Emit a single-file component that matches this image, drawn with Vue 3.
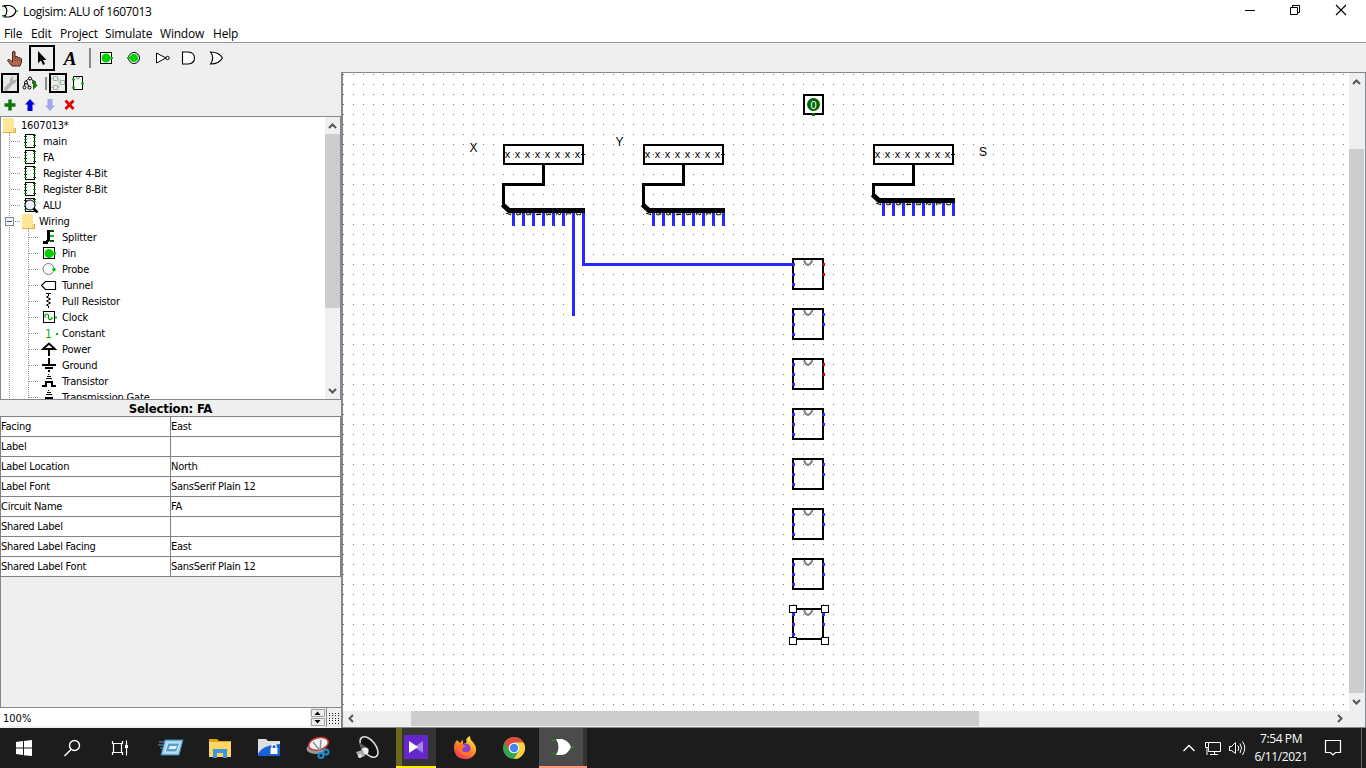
<script setup>
const menus = [
  { t: 'File', w: 27 }, { t: 'Edit', w: 29 }, { t: 'Project', w: 45 },
  { t: 'Simulate', w: 55 }, { t: 'Window', w: 53 }, { t: 'Help', w: 40 }
]
const tree = [
  { t: '1607013*', k: 'root', x: 21 },
  { t: 'main', k: 'circuit', x: 43 },
  { t: 'FA', k: 'circuit', x: 43 },
  { t: 'Register 4-Bit', k: 'circuit', x: 43 },
  { t: 'Register 8-Bit', k: 'circuit', x: 43 },
  { t: 'ALU', k: 'current', x: 43 },
  { t: 'Wiring', k: 'folder', x: 39 },
  { t: 'Splitter', k: 'splitter', x: 62 },
  { t: 'Pin', k: 'pin', x: 62 },
  { t: 'Probe', k: 'probe', x: 62 },
  { t: 'Tunnel', k: 'tunnel', x: 62 },
  { t: 'Pull Resistor', k: 'resistor', x: 62 },
  { t: 'Clock', k: 'clock', x: 62 },
  { t: 'Constant', k: 'constant', x: 62 },
  { t: 'Power', k: 'power', x: 62 },
  { t: 'Ground', k: 'ground', x: 62 },
  { t: 'Transistor', k: 'transistor', x: 62 },
  { t: 'Transmission Gate', k: 'gate', x: 62 }
]
const attrs = [
  ['Facing', 'East'], ['Label', ''], ['Label Location', 'North'],
  ['Label Font', 'SansSerif Plain 12'], ['Circuit Name', 'FA'], ['Shared Label', ''],
  ['Shared Label Facing', 'East'], ['Shared Label Font', 'SansSerif Plain 12']
]
const buses = [
  { x: 503, y: 208, n: 8 }, { x: 643, y: 208, n: 8 }, { x: 873, y: 198, n: 8 }
]
const chips = [0, 1, 2, 3, 4, 5, 6, 7].map(i => ({ y: 258 + i * 50, err: i === 0 || i === 2 }))
const handles = [[789.5, 605.5], [821.5, 605.5], [789.5, 637.5], [821.5, 637.5]]
</script>

<template>
  <div class="screen">
    <header class="title">
      <svg class="logo" width="20" height="20" viewBox="0 0 20 20">
        <path d="M4.500 5.500H9C13 6 15 8.500 16 11C15 14 13 16.500 9 17H4.500C7.500 13 7.500 9 4.500 5.500Z" fill="#fff" stroke="#000" stroke-width="1.200" />
        <path d="M2 6.500H5M2 15.500H5" stroke="#000" /><path d="M2 6h2M2 16h2M16 11h2" stroke="#00c800" stroke-width="1.500" />
      </svg>
      <span class="caption">Logisim: ALU of 1607013</span>
      <svg class="winbtns" width="146" height="24" viewBox="1220 0 146 24" fill="none" stroke="#000">
        <path d="M1245 10.500H1255" />
        <path d="M1290.500 7.500H1297.500V14.500H1290.500ZM1292.500 7V5.500H1299.500V12.500H1298" />
        <path d="M1336 5L1346 15M1346 5L1336 15" stroke-width="1.100" />
      </svg>
    </header>
    <nav class="menubar"><span v-for="m in menus" :key="m.t" :style="{ width: m.w + 'px' }">{{ m.t }}</span></nav>

    <div class="toolbar">
      <svg class="tool" viewBox="0 0 28 28">
        <path d="M13 7.500Q14.500 6.500 15 8V13L17 12.500L18.500 13.500L20 13.500L21.500 15V18L20 22H12L7.500 16.500Q8 15 9.500 15.500L12.500 18V8Z" fill="#b5694e" stroke="#3c241c" />
        <path d="M15 13V17M17.500 14V17M19.500 15V17" stroke="#56382c" stroke-width=".6" />
      </svg>
      <div class="tool chosen">
        <svg width="28" height="28" viewBox="0 0 28 28"><path d="M10 7V19L13 16.500L15 21L17 20L15 16H18.500Z" fill="#000" /></svg>
      </div>
      <span class="tool letter">A</span>
      <i class="sep"></i>
      <svg class="tool" viewBox="0 0 28 28">
        <rect x="8.500" y="8.500" width="11" height="11" fill="#fff" stroke="#000" /><circle cx="14" cy="14" r="4.500" fill="#00d000" /><path d="M17 14h4" stroke="#00d000" stroke-width="2" />
      </svg>
      <svg class="tool" viewBox="0 0 28 28">
        <circle cx="14" cy="14" r="5.500" fill="#fff" stroke="#000" /><circle cx="14" cy="14" r="4" fill="#00d000" /><path d="M7 14h4" stroke="#00d000" stroke-width="2" />
      </svg>
      <svg class="tool" viewBox="0 0 28 28" fill="#fff" stroke="#000"><path d="M8.500 9V19L18 14Z" /><circle cx="19.500" cy="14" r="1.700" /></svg>
      <svg class="tool" viewBox="0 0 28 28" fill="#fff" stroke="#000"><path d="M6.500 8H12Q18.500 8.500 18.500 14T12 20H6.500Z" stroke-width="1.100" /></svg>
      <svg class="tool" viewBox="0 0 28 28" fill="#fff" stroke="#000"><path d="M6.500 8Q15 8 18.500 14Q15 20 6.500 20Q11 14 6.500 8Z" stroke-width="1.100" /></svg>
    </div>

    <main class="body">
      <aside class="side">
        <div class="views">
          <svg width="90" height="22" viewBox="0 72 90 22">
            <rect x="2" y="74" width="16" height="18" fill="#e8e8e8" stroke="#000" stroke-width="2" />
            <path d="M4 88L10 82Q9 79 12 77L14 76L12.500 79L14 80.500L16.500 79Q17 83 13 84L6.500 91Q4 91 4 88Z" fill="#b0b0b0" />
            <g fill="none" stroke="#000">
              <circle cx="30" cy="78.500" r="1.500" /><path d="M28.500 79L26 81M31.500 79L34 82M25 83L24 86M27 83L29 87" />
              <circle cx="26" cy="82.500" r="1.500" /><circle cx="24.500" cy="87.500" r="1.500" /><circle cx="34" cy="82.500" r="1.500" /><circle cx="29.500" cy="87.500" r="1.500" />
            </g>
            <path d="M33 80V90L37.500 85.500Z" fill="#0a800a" />
            <path d="M46 77V90" stroke="#888" stroke-width="2" />
            <rect x="50" y="74" width="16" height="18" fill="#ececec" stroke="#000" stroke-width="2" />
            <g fill="none" stroke="#aaa"><path d="M53.500 76.500h4v4h-4ZM53.500 85.500h4v4h-4ZM60.500 80.500h4v4h-4Z" /><path d="M51 78.500h2M51 87.500h2M58 78.500h1v4h1M58 87.500h1v-4" stroke="#8fdc8f" /></g>
            <path d="M73.500 76.500H82.500V89.500H73.500Z" fill="#fff" stroke="#000" /><path d="M76.500 77Q78 81 79.500 77" fill="none" stroke="#777" />
            <path d="M72 79.500h3M72 87.500h3M81 83.500h3" stroke="#00c800" stroke-width="2" />
          </svg>
        </div>
        <div class="views">
          <svg width="90" height="22" viewBox="0 94 90 22">
            <path d="M10 99.500V110.500M4.500 105H15.500" stroke="#0a760a" stroke-width="3.400" />
            <path d="M30 99L35 104.500H32.500V111H27.500V104.500H25Z" fill="#0000e0" />
            <path d="M50 111L55 105.500H52.500V99H47.500V105.500H45Z" fill="#a6a6ea" />
            <path d="M65.500 100.500L73.500 109M73.500 100.500L65.500 109" stroke="#df0000" stroke-width="2.800" />
          </svg>
        </div>

        <section class="explorer">
          <div class="rows">
            <div v-for="(r, i) in tree" :key="r.t" class="row">
              <svg :width="r.x" height="16" :viewBox="'0 0 ' + r.x + ' 16'" shape-rendering="crispEdges" fill="none" stroke="#000">
                <g v-if="i" stroke="#909090" stroke-dasharray="1 1">
                  <path d="M9.500 0V16" />
                  <path v-if="i < 7" d="M11 8.500H21" /><path v-else d="M28.500 0V16M29 8.500H39" />
                </g>
                <g v-if="r.k === 'root' || r.k === 'folder'" :transform="r.k === 'root' ? 'translate(3 0)' : 'translate(22 0)'" stroke="none">
                  <path d="M0 1H11V11H13V16H0Z" fill="#f6d577" /><path d="M0 1H11V10H10V15H1V14H0Z" fill="#ffe596" /><path d="M0 15H13V16H0ZM12 11H13V15H12Z" fill="#e0b050" />
                </g>
                <g v-if="r.k === 'folder'"><rect x="5.500" y="4.500" width="8" height="8" fill="#f4f4f4" stroke="#888" /><path d="M7 8.500H12" stroke="#3450a8" /></g>
                <g v-if="r.k === 'circuit' || r.k === 'current'">
                  <rect x="25.500" y="1.500" width="9" height="13" fill="#fff" />
                  <path d="M24 6.500h3M24 12.500h3M33 4.500h3M33 8.500h3" stroke="#00c800" /><path d="M24 3.500h3M24 9.500h3M33 2.500h3M33 12.500h3" stroke="#005000" />
                  <g v-if="r.k === 'current'" shape-rendering="auto"><circle cx="30" cy="8" r="5" fill="#ededff" /><path d="M33.500 11.500L37.500 15.500" stroke-width="2.500" /></g>
                </g>
                <g v-if="r.k === 'splitter'"><path d="M48.500 1V11L46.500 13.500H43" stroke-width="3" /><path d="M50 2h4M50 12h4" stroke="#005000" stroke-width="2" /><path d="M50 7h4" stroke="#00d000" stroke-width="2" /></g>
                <g v-if="r.k === 'pin'" shape-rendering="auto"><rect x="43.500" y="2.500" width="11" height="11" fill="#fff" /><circle cx="49" cy="8.500" r="4.500" fill="#00d000" stroke="none" /><path d="M53 8.500h3" stroke="#00d000" stroke-width="2.500" /></g>
                <g v-if="r.k === 'probe'" shape-rendering="auto"><circle cx="48.500" cy="8" r="5.500" fill="#fff" stroke="#777" /><circle cx="54" cy="8.500" r="1.800" fill="#00d000" stroke="none" /></g>
                <path v-if="r.k === 'tunnel'" d="M41.500 8.500L45.500 4.500H55.500V12.500H45.500Z" shape-rendering="auto" stroke-width="1.200" />
                <path v-if="r.k === 'resistor'" d="M46 .5H51M48.500 0V3L46.500 4L50.500 6L46.500 8L50.500 10L46.500 12L48.500 13V15" shape-rendering="auto" />
                <g v-if="r.k === 'clock'" shape-rendering="auto"><rect x="43.500" y="2.500" width="11" height="11" fill="#fff" /><path d="M45 8.500V6Q47 4 48.500 6V9Q49.500 12 52 9.500V8" stroke="#00a000" stroke-width="1.200" /><path d="M55 8.500h2" stroke="#00d000" stroke-width="2" /></g>
                <g v-if="r.k === 'constant'"><text x="45" y="13" fill="#00b800" stroke="none" class="one">1</text><path d="M56 9h2" stroke="#00c000" stroke-width="2" /></g>
                <g v-if="r.k === 'power'" shape-rendering="auto"><path d="M43 8L49 2.500L55 8Z" stroke-width="1.800" /><path d="M49 8V15" stroke-width="2" /></g>
                <g v-if="r.k === 'ground'"><path d="M49 1V8M42 8H56M45 11H53M48 14H50" stroke-width="2" /></g>
                <g v-if="r.k === 'transistor' || r.k === 'gate'"><path d="M47 3.500H51M48.500 2V1M46 5.500H52" /><path d="M42 13H46V9H52V13H56" stroke-width="2" /></g>
              </svg>
              <span>{{ r.t }}</span>
            </div>
          </div>
          <div class="vscroll">
            <svg width="15" height="17" viewBox="0 0 15 17"><path d="M4 11L7.500 7.500L11 11" fill="none" stroke="#555" stroke-width="2" /></svg>
            <i class="thumb"></i>
            <svg width="15" height="17" viewBox="0 0 15 17"><path d="M4 7L7.500 10.500L11 7" fill="none" stroke="#555" stroke-width="2" /></svg>
          </div>
        </section>

        <h2 class="heading">Selection: FA</h2>
        <div class="attrs">
          <div v-for="a in attrs" :key="a[0]" class="attr"><span>{{ a[0] }}</span><span>{{ a[1] }}</span></div>
        </div>
        <div class="blank"></div>
        <div class="zoom">
          <span class="pct">100%</span>
          <svg width="31" height="19" viewBox="310 708 31 19">
            <path d="M311.500 709.500H324.500V716.500H311.500ZM311.500 718.500H324.500V725.500H311.500Z" fill="#eee" stroke="#a0a0a0" />
            <path d="M314.500 715L317.500 711.500L320.500 715ZM314.500 720L317.500 723.500L320.500 720Z" />
            <path d="M326.500 708V727" stroke="#888" />
            <path v-for="y in 5" :key="y" :d="`M329 ${710.5 + y * 2.5}H340`" stroke="#222" stroke-dasharray="1 2" shape-rendering="crispEdges" />
          </svg>
        </div>
      </aside>

      <section class="work">
        <svg class="canvas" width="1006" height="638" viewBox="343 73 1006 638">
          <defs><pattern id="dots" x="343" y="74" width="10" height="10" patternUnits="userSpaceOnUse"><rect width="1" height="1" fill="#777" /></pattern></defs>
          <rect x="343" y="73" width="1006" height="638" fill="#fff" />
          <rect x="343" y="73" width="1006" height="638" fill="url(#dots)" />

          <g class="lbl"><text x="469.500" y="152">X</text><text x="615.500" y="146">Y</text><text x="979" y="156">S</text></g>

          <g v-for="b in buses" :key="b.x">
            <rect :x="b.x + 1" y="145" width="79" height="19" fill="none" stroke="#000" stroke-width="2" />
            <path :d="`M${b.x + 78} 154.500h4`" stroke="#000" />
            <text v-for="i in 8" :key="i" class="val" :x="b.x + 4.5 + (i - 1) * 10" y="158">x</text>
            <text v-for="i in 8" :key="'d' + i" class="digit" :transform="`translate(${b.x + 3 + (i - 1) * 10} ${b.y + 3.8}) rotate(90)`" y="0">{{ 8 - i }}</text>
            <path v-for="i in 8" :key="'w' + i" :d="`M${b.x + .5 + i * 10} ${b.y + 4}v14`" stroke="#2828ff" stroke-width="3" />
            <path :d="`M${b.x + 40.5} 165V184.500H${b.x + .5}V${b.y - 2}`" fill="none" stroke="#000" stroke-width="3" />
            <path :d="`M${b.x - .5} ${b.y - 3.500}L${b.x + 6} ${b.y + 2.500}H${b.x + 82}`" fill="none" stroke="#000" stroke-width="5" />
          </g>
          <path d="M573.500 213V316M583.500 213V264.500H793" fill="none" stroke="#2828ff" stroke-width="3" />

          <rect x="804" y="95" width="19" height="19" fill="none" stroke="#000" stroke-width="2" />
          <circle cx="813.500" cy="104.500" r="6.500" fill="#006400" /><text class="zero" x="813.500" y="108.500">0</text>
          <rect x="812" y="113" width="3" height="3" fill="#006400" />

          <g v-for="c in chips" :key="c.y">
            <path :d="`M804 ${c.y + 2}L805.500 ${c.y + 5.5}L808 ${c.y + 7}L810.500 ${c.y + 5.5}L812.500 ${c.y + 2}`" fill="none" stroke="#808080" stroke-width="2" />
            <rect x="793" :y="c.y + 1" width="30" height="30" fill="none" stroke="#000" stroke-width="2" />
            <path :d="`M793.500 ${c.y + 5}v3m0 7v3m0 7v3`" stroke="#2828ff" stroke-width="3" />
            <path :d="`M823.500 ${c.y + 5}v3m0 7v3`" :stroke="c.err ? '#c00000' : '#2828ff'" stroke-width="3" />
          </g>
          <rect v-for="h in handles" :key="h.join()" :x="h[0]" :y="h[1]" width="7" height="7" fill="#fff" stroke="#000" />
        </svg>
        <svg class="vbar" width="16" height="638" viewBox="1349 73 16 638" fill="none" stroke="#555" stroke-width="2">
          <rect x="1349" y="149" width="15" height="544" fill="#cdcdcd" stroke="none" /><path d="M1353 84L1356.500 80.500L1360 84M1353 700L1356.500 703.500L1360 700" />
        </svg>
        <svg class="hbar" width="1022" height="16" viewBox="343 711 1022 16" fill="none" stroke="#555" stroke-width="2">
          <rect x="411" y="711" width="568" height="15" fill="#cdcdcd" stroke="none" /><path d="M353 715L349.500 718.500L353 722M1338 715L1341.500 718.500L1338 722" />
        </svg>
      </section>
    </main>

    <footer class="taskbar">
      <div class="task w48"><svg width="16" height="16" viewBox="0 0 16 16" fill="#fff"><path d="M0 2L7 1V7.500H0ZM8 .9L16 0V7.500H8ZM0 8.500H7V15L0 14ZM8 8.500H16V16L8 15.200Z" /></svg></div>
      <div class="task w48"><svg width="18" height="18" viewBox="0 0 18 18" fill="none" stroke="#fff" stroke-width="1.400"><circle cx="11.500" cy="6.500" r="5" /><path d="M8 10.500L1.500 17" /></svg></div>
      <div class="task w48"><svg width="18" height="18" viewBox="0 0 18 18" fill="none" stroke="#fff" stroke-width="1.200"><path d="M1.500 2V4.500H11.500V2M1.500 16V13.500H11.500V16M2.500 4.500V13.500M10.500 4.500V13.500M15.500 1.500V16.500" /><path d="M14 6h3v3h-3Z" fill="#fff" stroke="none" /></svg></div>
      <div class="task first"><svg width="26" height="24" viewBox="0 0 26 24"><path d="M7 4H25L21 19H3Z" fill="#9fd3ef" stroke="#3a7fae" /><path d="M10 7H22L18.500 16H7Z" fill="#5d9dca" stroke="#d8f0fb" /><path d="M12 10H19L17.500 13H10.500Z" fill="#e6f4fb" /><path d="M1 6H7M0 9H5M2 12H4" stroke="#5c93b8" /></svg></div>
      <div class="task"><svg width="24" height="22" viewBox="0 0 24 22"><path d="M1 2H9L11 4H23V20H1Z" fill="#e8a40c" /><path d="M1 5H23V20H1Z" fill="#ffd768" /><path d="M5 12H19V21H15V16H9V21H5Z" fill="#3b98dc" /></svg></div>
      <div class="task"><svg width="24" height="22" viewBox="0 0 24 22"><path d="M1 2H9L11 4H23V19H1Z" fill="#dedee2" /><path d="M1 17Q5 8 23 7V19H1Z" fill="#1b62da" /><rect x="13.500" y="11" width="7" height="6" fill="#fff" /><path d="M15 11V8.500Q17 6 19 8.500V11" fill="none" stroke="#fff" stroke-width="1.300" /></svg></div>
      <div class="task"><svg width="26" height="26" viewBox="0 0 26 26"><ellipse cx="11" cy="14" rx="9.500" ry="5" fill="#999" /><ellipse cx="13.500" cy="9" rx="10" ry="6" fill="#f4f4f4" stroke="#d43434" stroke-width="1.500" transform="rotate(-15 13 9)" /><path d="M8 7L16 17M16 5L15 16" stroke="#8a9298" stroke-width="1.500" /><g fill="none" stroke="#208bcc" stroke-width="2"><circle cx="16" cy="20.500" r="2.500" /><circle cx="21" cy="17" r="2.500" /></g></svg></div>
      <div class="task"><svg width="28" height="26" viewBox="0 0 28 26"><ellipse cx="16" cy="12" rx="6.500" ry="12" fill="#111" stroke="#ddd" stroke-width="1.500" transform="rotate(-38 16 12)" /><path d="M6 7L16 14L10 20Z" fill="#555" /><circle cx="12" cy="16" r="3.600" fill="#eee" /><path d="M3 17L10 15L12 21L6 23Z" fill="#aaa" /><circle cx="7" cy="21" r="2" fill="#ddd" /></svg></div>
      <div class="task running"><svg width="24" height="24" viewBox="0 0 24 24"><rect width="24" height="24" rx="1" fill="#6526cb" /><path d="M19 6V18L10 12Z" fill="#a283df" /><path d="M5 6V18L14 12Z" fill="#fff" /></svg></div>
      <div class="task fox"><svg width="24" height="24" viewBox="0 0 24 24"><defs><linearGradient id="ff" x1=".8" y1="0" x2=".2" y2="1"><stop stop-color="#fff044" /><stop offset=".5" stop-color="#ff8b20" /><stop offset="1" stop-color="#f02866" /></linearGradient></defs><path d="M4 4L7 7Q9 4 10 4V8Q15 7 13 4Q14 1 17 0Q17 4 20 6Q25 12 22 18Q18 24 11 23Q1 22 1 12Q1 7 4 4Z" fill="url(#ff)" /><circle cx="12.500" cy="12.500" r="5" fill="#8740d5" /><path d="M5 9Q10 7 13 11Q9 11 9 15Q13 18 18 14Q17 20 11 19Q5 17 5 9Z" fill="#ff7625" /></svg></div>
      <div class="task"><svg width="22" height="22" viewBox="0 0 24 24"><circle cx="12" cy="12" r="12" fill="#30a552" /><path d="M1.600 6A12 12 0 0 1 22.400 6H12L6.800 15Z" fill="#e24a40" /><path d="M22.400 6A12 12 0 0 1 12 24L17.200 15L12 6Z" fill="#ffcf3c" /><circle cx="12" cy="12" r="5.800" fill="#fff" /><circle cx="12" cy="12" r="4.600" fill="#4285f4" /></svg></div>
      <div class="task logi"><svg width="24" height="20" viewBox="0 0 24 20"><path d="M5 2H11Q18 4 20 10Q17 17 11 18H5Q10 10 5 2Z" fill="#fff" /><path d="M1 3.500H5M1 16.500H5M20 10H23" stroke="#109010" stroke-width="1.500" /></svg></div>
      <span class="grow"></span>
      <svg width="72" height="40" viewBox="1177 728 72 40" fill="none" stroke="#fff">
        <path d="M1183.500 751L1189 745.500L1194.500 751" stroke-width="1.300" />
        <path d="M1209 742.500H1220.500V751.500H1208.500V748M1214.500 752V754.500M1210 754.500H1218M1205.500 742.500H1208.500V747.500H1205.500ZM1207 748V755" />
        <path d="M1229.500 746.500H1231.500L1235.500 742.500V753.500L1231.500 750.500H1229.500ZM1238 745.500Q1239.500 748 1238 751M1240 743.500Q1243 748 1240 753M1242.500 741.500Q1247 748 1242.500 755" />
      </svg>
      <div class="clock"><span>7:54 PM</span><span>6/11/2021</span></div>
      <svg width="53" height="40" viewBox="1313 728 53 40" fill="none" stroke="#fff"><path d="M1325.500 740.500H1340.500V752.500H1335.500L1333 755L1330.500 752.500H1325.500Z" stroke-width="1.200" /><path d="M1361.500 728V768" stroke="#666" /></svg>
    </footer>
  </div>
</template>

<style>
body { margin: 0; overflow: hidden; }
</style>
<style scoped>
.screen { width: 1366px; height: 768px; display: flex; flex-direction: column; background: #fff; color: #000; font: 11px/16px "DejaVu Sans Condensed", "DejaVu Sans", sans-serif; overflow: hidden; }
svg { display: block; flex: none; }
.title { height: 24px; display: flex; font: 12px/24px "Open Sans", sans-serif; }
.logo { margin-right: 3px; }
.caption { flex: 1; letter-spacing: -.38px; white-space: nowrap; }
.menubar { height: 18px; padding-left: 4px; border-bottom: 1px solid #999; display: flex; font: 12px/19px "Open Sans", sans-serif; letter-spacing: -.2px; }
.menubar span { flex: none; white-space: nowrap; }
.toolbar { height: 28px; padding-top: 1px; background: #efefef; display: flex; }
.tool { width: 28px; height: 28px; flex: none; box-sizing: border-box; }
.chosen { width: 26px; height: 26px; margin: 1px; border: 2px solid #000; overflow: hidden; }
.chosen svg { margin: -3px 0 0 -3px; }
.letter { font: italic bold 19px/29px "Liberation Serif", serif; text-align: center; }
.sep { width: 2px; height: 20px; margin: 4px 1px 0 5px; background: #888; }
.body { height: 656px; display: flex; }
.side { width: 341px; border-right: 1px solid #828790; display: flex; flex-direction: column; background: #efefef; }
.views { height: 22px; flex: none; }
.explorer { height: 284px; box-sizing: border-box; border: 1px solid #828790; background: #fff; display: flex; overflow: hidden; }
.rows { flex: 1; height: 282px; overflow: hidden; }
.row { height: 16px; line-height: 18px; display: flex; margin-left: -1px; white-space: nowrap; letter-spacing: -.18px; }
.vscroll { width: 15px; background: #f0f0f0; display: flex; flex-direction: column; justify-content: space-between; }
.thumb { height: 174px; margin-bottom: 74px; background: #cdcdcd; }
.heading { height: 16px; margin: 0; text-align: center; font: bold 13px/18px "DejaVu Sans Condensed", sans-serif; letter-spacing: -.15px; }
.attrs { border-top: 1px solid #828282; border-left: 1px solid #828282; }
.attr { display: flex; height: 20px; line-height: 19px; background: #fff; letter-spacing: -.25px; }
.attr span { width: 169px; border-right: 1px solid #828282; border-bottom: 1px solid #828282; box-sizing: content-box; height: 19px; white-space: nowrap; }
.blank { flex: 1; border-bottom: 1px solid #828790; border-left: 1px solid #828790; }
.zoom { height: 20px; display: flex; background: #efefef; }
.pct { width: 307px; padding-left: 3px; background: #fff; height: 18px; line-height: 21px; }
.work { width: 1022px; border-top: 1px solid #828790; border-right: 1px solid #828790; border-bottom: 1px solid #828790; display: grid; grid-template-columns: 1006px 16px; grid-template-rows: 638px 16px; margin-left: 1px; height: 654px; box-shadow: -1px 0 #828790; background: #efefef; }
.hbar { grid-column: 1 / 3; }
.lbl { font: 12px "Liberation Sans", sans-serif; }
.val { font: 11px "Liberation Sans", sans-serif; text-anchor: middle; }
.digit { font: bold 7px "Liberation Sans", sans-serif; }
.zero { font: 11px "Liberation Sans", sans-serif; fill: #fff; text-anchor: middle; }
.one { font: 12px "DejaVu Sans Condensed", sans-serif; }
.taskbar { height: 40px; background: #1c1c1c; display: flex; }
.task { width: 49px; height: 40px; flex: none; display: flex; align-items: center; justify-content: center; box-sizing: border-box; }
.w48 { width: 48px; }
.first { margin-left: 2px; }
.running { width: 40px; margin-left: 5px; background: linear-gradient(90deg, #6c661e 6px, #343434 6px); border-bottom: 2px solid #ffee00; }
.fox { margin-left: 4px; }
.logi { width: 48px; background: linear-gradient(90deg, #4b4b4b 44px, #333 44px); border-bottom: 2px solid #ff9678; margin-left: 1px; }
.grow { flex: 1; }
.clock { width: 64px; padding-top: 2px; display: flex; flex-direction: column; align-items: center; color: #fff; font: 12px/18px "Open Sans", sans-serif; letter-spacing: -.4px; }
</style>
